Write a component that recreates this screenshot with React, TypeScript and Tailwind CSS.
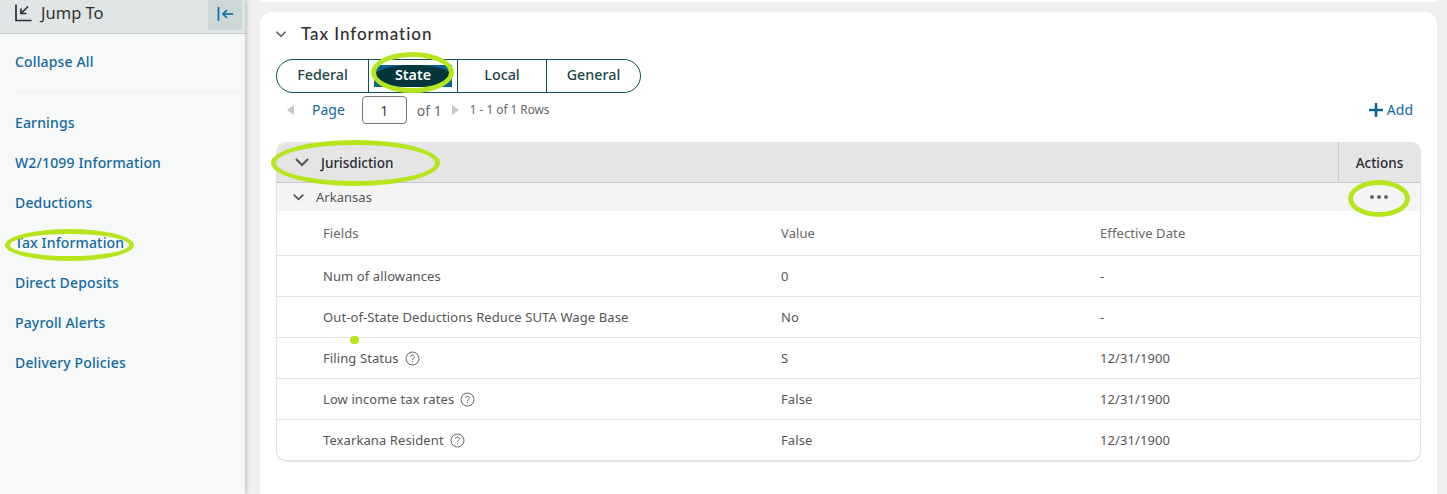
import React from "react";

const navLinks = ["Earnings", "W2/1099 Information", "Deductions", "Tax Information", "Direct Deposits", "Payroll Alerts", "Delivery Policies"];

const rows = [
  { field: "Num of allowances", value: "0", date: "-", help: false },
  { field: "Out-of-State Deductions Reduce SUTA Wage Base", value: "No", date: "-", help: false },
  { field: "Filing Status", value: "S", date: "12/31/1900", help: true },
  { field: "Low income tax rates", value: "False", date: "12/31/1900", help: true },
  { field: "Texarkana Resident", value: "False", date: "12/31/1900", help: true },
];

const Chevron = ({ className }: { className: string }) => (
  <svg className={className} viewBox="0 0 16 10" fill="none" stroke="currentColor" strokeWidth={2}>
    <path d="M2 2l6 6 6-6" />
  </svg>
);

const HelpIcon = () => (
  <svg className="w-[15px] h-[15px] -mt-[1px] text-[#666]" viewBox="0 0 15 15" fill="none" stroke="currentColor">
    <circle cx="7.5" cy="7.5" r="6.5" />
    <path d="M5.6 5.9c0-1.1.9-1.8 1.9-1.8s1.9.7 1.9 1.7c0 1.4-1.9 1.5-1.9 3" />
    <path d="M7.5 10.2v1.2" />
  </svg>
);

// Green hand-drawn annotation rings
const Ring = ({ className }: { className: string }) => (
  <div className={`absolute rounded-[50%] border-[5px] border-[#b5e61d] ${className}`} />
);

export default function App() {
  return (
    <div className="relative flex w-[1447px] h-[494px] overflow-hidden bg-[#f0f0f0] font-['Noto_Sans',sans-serif]">
      {/* Sidebar */}
      <aside className="w-[245px] shrink-0 bg-[#f7f9f9] shadow-[2px_0_4px_rgba(0,0,0,0.18)] z-10">
        <div className="flex items-center justify-between h-[34px] pl-[15px] pr-[3px] bg-[#dfe6e5] border-b border-[#c9cccc]">
          <div className="flex items-center gap-[9px] -mt-[8px]">
            <svg className="w-[17px] h-[18px] text-[#2f2a3a]" viewBox="0 0 17 18" fill="none" stroke="currentColor" strokeWidth={1.7}>
              <path d="M1 0.5v16h15.5" />
              <path d="M13 2.5L6 9.5" />
              <path d="M6 4.5v5h5.5" />
            </svg>
            <span className="text-[16.5px] leading-[20px] text-[#333]">Jump To</span>
          </div>
          <button className="flex items-center justify-center w-[34px] h-[30px] -mt-[4px] bg-[#cfd8d8] text-[#0a6ea8]">
            <svg className="w-[17px] h-[14px] -mt-[2px]" viewBox="0 0 17 14" fill="none" stroke="currentColor" strokeWidth={1.7}>
              <path d="M1.5 0v14" />
              <path d="M16 7H6" />
              <path d="M10 3L6 7l4 4" />
            </svg>
          </button>
        </div>
        <div className="px-[15px] pt-[18px]">
          <a className="block text-[14px] leading-[20px] font-medium tracking-[0.15px] text-[#13689f]">Collapse All</a>
        </div>
        <div className="ml-[15px] mt-[20px] border-t border-[#edf0f0]" />
        <nav className="flex flex-col gap-[20px] px-[15px] pt-[20px]">
          {navLinks.map((link) => (
            <a key={link} className="block text-[14px] leading-[20px] font-medium tracking-[0.15px] text-[#13689f]">
              {link}
            </a>
          ))}
        </nav>
      </aside>

      {/* Main */}
      <main className="flex-1 pl-[15px] pr-[10px]">
        <div className="h-[2px] bg-white rounded-b-[12px]" />
        <section className="mt-[10px] h-[500px] bg-white rounded-[12px] pl-[16px] pr-[16px]">
          <div className="flex items-center gap-[15px] h-[43px]">
            <Chevron className="w-[12px] h-[8px] -ml-[1px] text-[#555]" />
            <h2 className="-ml-[1px] text-[17px] leading-[22px] font-medium tracking-[0.95px] text-[#2e2e2e] font-['Lato',sans-serif]">Tax Information</h2>
          </div>

          {/* Tabs */}
          <div className="flex w-[365px] h-[34px] mt-[4px] border border-[#0e4f52] rounded-full text-[14.3px] font-medium text-[#1d4447]">
            <div className="flex items-center justify-center w-[92px] pb-[2px] border-r border-[#0e4f52]">Federal</div>
            <div className="flex items-center justify-center w-[89px] border-r border-[#0e4f52] py-[5px] px-[5px]">
              <div className="flex items-center justify-center w-full h-full bg-[#0a6496]">
                <span className="flex items-center justify-center w-full h-[22px] pb-[2px] rounded-[50%] bg-[#03363a] text-white font-semibold">State</span>
              </div>
            </div>
            <div className="flex items-center justify-center w-[89px] pb-[2px] border-r border-[#0e4f52]">Local</div>
            <div className="flex items-center justify-center flex-1 pb-[2px]">General</div>
          </div>

          {/* Pager */}
          <div className="flex items-center h-[34px] pr-[8px] text-[14px]">
            <svg className="w-[7px] h-[10px] ml-[11px] text-[#c8c8c8]" viewBox="0 0 7 10" fill="currentColor"><path d="M7 0v10L0 5z" /></svg>
            <span className="ml-[18px] pb-[1px] text-[#13689f]">Page</span>
            <span className="flex items-center justify-center w-[45px] h-[28px] ml-[17px] border border-[#777] rounded-[4px] text-[#444]">1</span>
            <span className="ml-[10px] text-[#666]">of 1</span>
            <svg className="w-[7px] h-[10px] ml-[10px] text-[#c8c8c8]" viewBox="0 0 7 10" fill="currentColor"><path d="M0 0v10l7-5z" /></svg>
            <span className="ml-[11px] text-[11.8px] text-[#666]">1 - 1 of 1 Rows</span>
            <div className="flex items-center gap-[4px] ml-auto text-[#13689f]">
              <svg className="w-[14px] h-[14px] text-[#0a6496]" viewBox="0 0 14 14" fill="none" stroke="currentColor" strokeWidth={2.6}>
                <path d="M7 0v14M0 7h14" />
              </svg>
              <span className="-mt-[1px]">Add</span>
            </div>
          </div>

          {/* Table */}
          <div className="mt-[15px] border border-[#e2e2e2] border-t-0 rounded-[10px] shadow-[0_1px_1px_rgba(0,0,0,0.12)]">
            <div className="flex h-[41px] -mx-px bg-[#e5e5e5] rounded-t-[10px] border-b border-[#c8c8c8] text-[13.5px] font-medium text-[#2b2b33]">
              <div className="flex flex-1 items-center gap-[11px] pl-[18px]">
                <Chevron className="w-[16px] h-[10px] text-[#555]" />
                <span className="mt-[3px]">Jurisdiction</span>
              </div>
              <div className="flex items-center justify-center w-[83px] pt-[3px] pr-[1px] border-l border-[#c8c8c8]">Actions</div>
            </div>
            <div className="flex items-center justify-between h-[28px] bg-[#f4f4f4] pl-[15px] pr-[32px]">
              <div className="flex items-center gap-[11px] text-[13px] tracking-[0.03px] text-[#555]">
                <Chevron className="w-[13px] h-[8px] text-[#555]" />
                <span className="mt-[1px]">Arkansas</span>
              </div>
              <div className="flex gap-[3px]">
                <span className="w-[4px] h-[4px] rounded-full bg-[#666]" />
                <span className="w-[4px] h-[4px] rounded-full bg-[#666]" />
                <span className="w-[4px] h-[4px] rounded-full bg-[#666]" />
              </div>
            </div>
            <div className="grid grid-cols-[458px_319px_1fr] h-[45px] pt-[2px] items-center pl-[46px] border-b border-[#e2e2e2] text-[13px] tracking-[0.1px] text-[#666]">
              <span>Fields</span>
              <span>Value</span>
              <span>Effective Date</span>
            </div>
            {rows.map((row, i) => (
              <div
                key={row.field}
                className={`grid grid-cols-[458px_319px_1fr] items-center pl-[46px] pt-[2px] text-[13px] tracking-[0.1px] text-[#555] ${i < rows.length - 1 ? "h-[41px] border-b border-[#e2e2e2]" : "h-[40px]"}`}
              >
                <span className="flex items-center gap-[6px]">
                  {row.field}
                  {row.help && <HelpIcon />}
                </span>
                <span>{row.value}</span>
                <span>{row.date}</span>
              </div>
            ))}
          </div>
        </section>
      </main>

      {/* Annotations */}
      <Ring className="z-20 left-[5px] top-[229px] w-[129px] h-[32px]" />
      <Ring className="z-20 left-[371px] top-[52px] w-[83px] h-[41px]" />
      <Ring className="z-20 left-[271px] top-[140px] w-[169px] h-[46px]" />
      <Ring className="z-20 left-[1348px] top-[180px] w-[62px] h-[37px]" />
      <div className="absolute z-20 left-[350px] top-[336px] w-[9px] h-[8px] rounded-full bg-[#b5e61d]" />
    </div>
  );
}
